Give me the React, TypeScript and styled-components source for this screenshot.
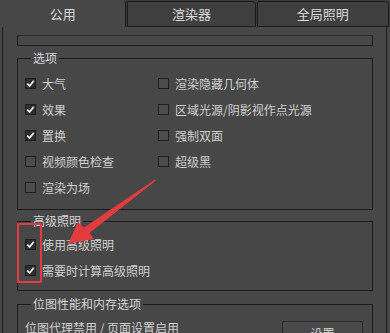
import React from 'react';
import styled, { createGlobalStyle } from 'styled-components';

const GlobalStyle = createGlobalStyle`
    html, body {
        margin: 0;
        padding: 0;
        background: #474747;
    }
    body {
        font-family: "Noto Sans CJK SC", "Noto Sans", sans-serif;
        color: #d2d2d2;
    }
`;

const Window = styled.div`
    position: relative;
    width: 390px;
    height: 333px;
    overflow: hidden;
    background: #474747;
`;

const TabBar = styled.div`
    display: flex;
    height: 27px;
    background: #3a3a3a;
`;

const Tab = styled.div<{ $active?: boolean; $width: number }>`
    box-sizing: border-box;
    width: ${(p) => p.$width}px;
    display: flex;
    align-items: center;
    justify-content: center;
    font-size: 13px;
    color: #dadada;
    background: ${(p) => (p.$active ? '#474747' : '#3f3f3f')};
    border: 1px solid #1b1b1b;
    border-bottom: ${(p) => (p.$active ? 'none' : '1px solid #1b1b1b')};
    border-left: ${(p) => (p.$active ? 'none' : '1px solid #1b1b1b')};
    border-top-color: ${(p) => (p.$active ? 'transparent' : '#1b1b1b')};
    border-radius: 0 4px 0 0;
    margin-top: ${(p) => (p.$active ? 0 : 1)}px;
    margin-right: 1px;
    padding-bottom: 1px;
`;

const Panel = styled.div`
    box-sizing: border-box;
    margin-left: 2px;
    width: 385px;
    height: 306px;
    border-left: 1px solid #1e1e1e;
    border-right: 1px solid #1e1e1e;
    padding: 8px 13px 0 14px;
`;

const StubBox = styled.div`
    height: 9px;
    border: 1px solid #1c1c1c;
    border-top-color: #2a2a2a;
`;

const Group = styled.fieldset<{ $gap: number; $pad?: string }>`
    margin: ${(p) => p.$gap}px 0 0;
    padding: ${(p) => p.$pad ?? '5px 0 9px 7px'};
    border: 1px solid #1c1c1c;
    min-width: 0;
`;

const Legend = styled.legend`
    font-size: 12px;
    line-height: 14px;
    padding: 0 2px;
    margin-left: 6px;
    color: #d6d6d6;
`;

const OptionGrid = styled.div<{ $rows: number; $cols: string }>`
    display: grid;
    grid-auto-flow: column;
    grid-template-rows: repeat(${(p) => p.$rows}, 26px);
    grid-template-columns: ${(p) => p.$cols};
`;

const Option = styled.label`
    display: flex;
    align-items: center;
    gap: 6px;
    font-size: 12px;
    white-space: nowrap;
    color: #d0d0d0;
`;

const Box = styled.span<{ $on?: boolean }>`
    box-sizing: border-box;
    width: 11px;
    height: 11px;
    border: 1px solid #1f1f1f;
    background: ${(p) => (p.$on ? '#2d2d2d' : '#4c4c4c')};
    display: flex;
    align-items: center;
    justify-content: center;
    flex-shrink: 0;
`;

const MemoryRow = styled.div`
    display: flex;
    justify-content: space-between;
    align-items: flex-start;
    font-size: 12px;
    line-height: 22px;
    padding-right: 9px;
`;

const SetupButton = styled.div`
    box-sizing: border-box;
    width: 81px;
    height: 22px;
    margin-top: 4px;
    border: 1px solid #2a2a2a;
    background: #4a4a4a;
    text-align: center;
    font-size: 12px;
    line-height: 24px;
    color: #dcdcdc;
`;

const Highlight = styled.div`
    position: absolute;
    left: 17px;
    top: 223px;
    width: 25px;
    height: 60px;
    box-sizing: border-box;
    border: 2px solid #e23c3f;
`;

const Arrow = styled.svg`
    position: absolute;
    left: 0;
    top: 0;
    pointer-events: none;
`;

function Check({ on }: { on?: boolean }) {
    return (
        <Box $on={on}>
            {on && (
                <svg width="9" height="9" viewBox="0 0 9 9">
                    <path d="M1.2 4.6 L3.6 7 L7.8 1.8" fill="none" stroke="#f2f2f2" strokeWidth="1.8" />
                </svg>
            )}
        </Box>
    );
}

const options: [string, boolean][] = [
    ['大气', true],
    ['效果', true],
    ['置换', true],
    ['视频颜色检查', false],
    ['渲染为场', false],
    ['渲染隐藏几何体', false],
    ['区域光源/阴影视作点光源', false],
    ['强制双面', false],
    ['超级黑', false]
];

export default function App() {
    return (
        <Window>
            <GlobalStyle />
            <TabBar>
                <Tab $active $width={127}>公用</Tab>
                <Tab $width={129}>渲染器</Tab>
                <Tab $width={133}>全局照明</Tab>
            </TabBar>
            <Panel>
                <StubBox />
                <Group $gap={5}>
                    <Legend>选项</Legend>
                    <OptionGrid $rows={5} $cols="133px 1fr">
                        {options.map(([label, on]) => (
                            <Option key={label}>
                                <Check on={on} />
                                {label}
                            </Option>
                        ))}
                    </OptionGrid>
                </Group>
                <Group $gap={4} $pad="3px 0 7px 7px">
                    <Legend>高级照明</Legend>
                    <OptionGrid $rows={2} $cols="1fr">
                        <Option>
                            <Check on />
                            使用高级照明
                        </Option>
                        <Option>
                            <Check on />
                            需要时计算高级照明
                        </Option>
                    </OptionGrid>
                </Group>
                <Group $gap={6} $pad="6px 0 0 7px">
                    <Legend>位图性能和内存选项</Legend>
                    <MemoryRow>
                        <span>位图代理禁用 / 页面设置启用</span>
                        <SetupButton>设置</SetupButton>
                    </MemoryRow>
                </Group>
            </Panel>
            <Highlight />
            <Arrow width="390" height="333" viewBox="0 0 390 333">
                <polygon
                    points="68,244 94,239 89.5,233 156,180.5 155,179.5 84,227.5 78,222"
                    fill="#e23c3f"
                />
            </Arrow>
        </Window>
    );
}
